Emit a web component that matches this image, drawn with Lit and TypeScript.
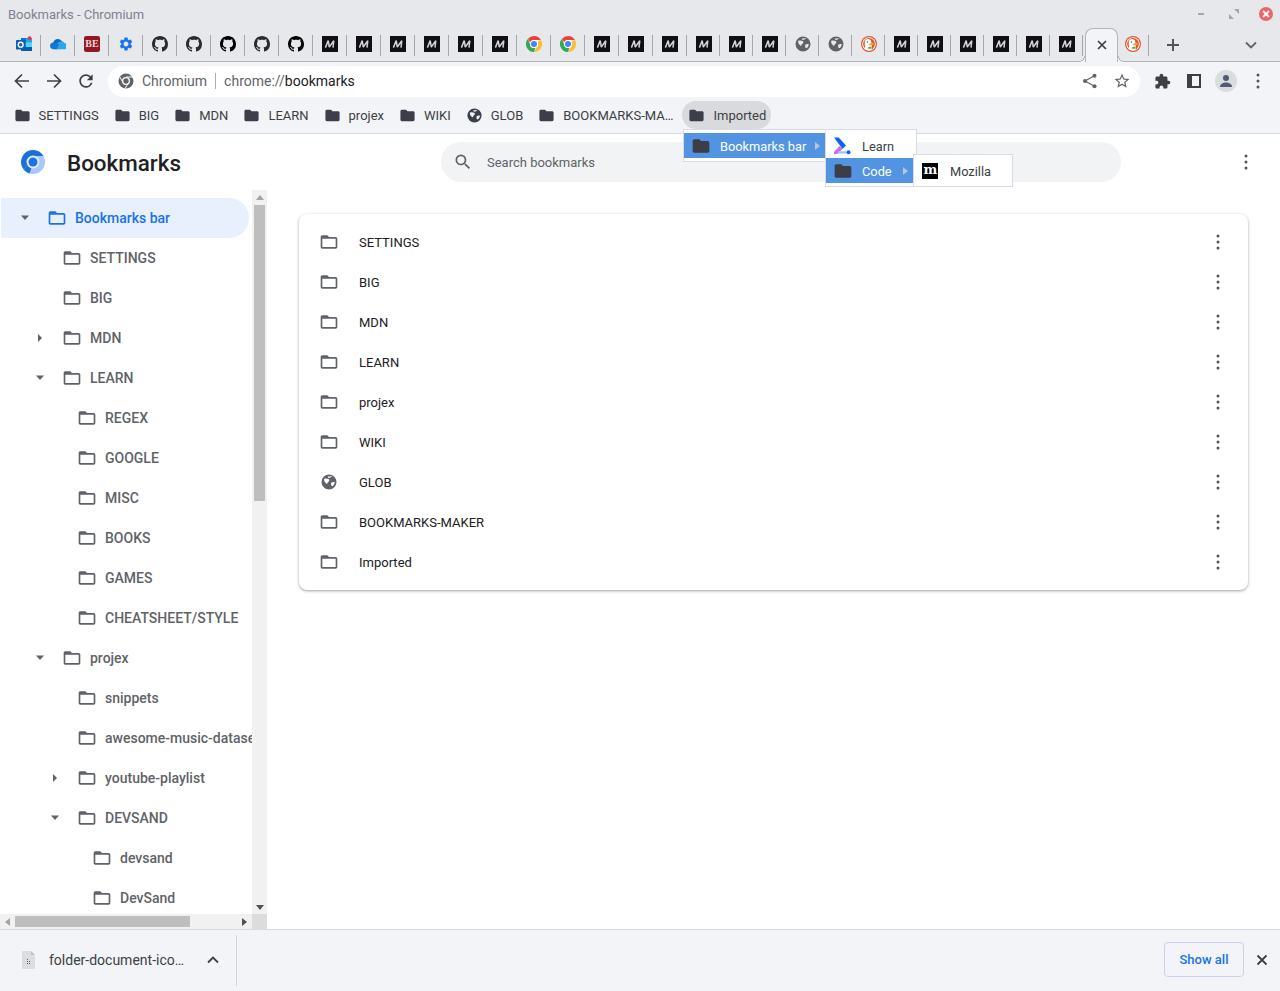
import { LitElement, html, css } from 'lit';
import { customElement } from 'lit/decorators.js';

const FOLDER_OPEN = 'M20 6h-8l-2-2H4c-1.1 0-1.99.9-1.99 2L2 18c0 1.1.9 2 2 2h16c1.1 0 2-.9 2-2V8c0-1.1-.9-2-2-2zm0 12H4V8h16v10z';
const FOLDER = 'M10 4H4c-1.1 0-1.99.9-1.99 2L2 18c0 1.1.9 2 2 2h16c1.1 0 2-.9 2-2V8c0-1.1-.9-2-2-2h-8l-2-2z';
const GITHUB = 'M8 0C3.58 0 0 3.58 0 8c0 3.54 2.29 6.53 5.47 7.59.4.07.55-.17.55-.38 0-.19-.01-.82-.01-1.49-2.01.37-2.53-.49-2.69-.94-.09-.23-.48-.94-.82-1.13-.28-.15-.68-.52-.01-.53.63-.01 1.08.58 1.23.82.72 1.21 1.87.87 2.33.66.07-.52.28-.87.51-1.07-1.78-.2-3.64-.89-3.64-3.95 0-.87.31-1.59.82-2.15-.08-.2-.36-1.02.08-2.12 0 0 .67-.21 2.2.82.64-.18 1.32-.27 2-.27.68 0 1.36.09 2 .27 1.53-1.04 2.2-.82 2.2-.82.44 1.1.16 1.92.08 2.12.51.56.82 1.27.82 2.15 0 3.07-1.87 3.75-3.65 3.95.29.25.54.73.54 1.48 0 1.07-.01 1.93-.01 2.2 0 .21.15.46.55.38A8.013 8.013 0 0016 8c0-4.42-3.58-8-8-8z';
const GEAR = 'M19.14 12.94c.04-.3.06-.61.06-.94 0-.32-.02-.64-.07-.94l2.03-1.58c.18-.14.23-.41.12-.61l-1.92-3.32c-.12-.22-.37-.29-.59-.22l-2.39.96c-.5-.38-1.03-.7-1.62-.94l-.36-2.54c-.04-.24-.24-.41-.48-.41h-3.84c-.24 0-.43.17-.47.41l-.36 2.54c-.59.24-1.13.57-1.62.94l-2.39-.96c-.22-.08-.47 0-.59.22L2.74 8.87c-.12.21-.08.47.12.61l2.03 1.58c-.05.3-.09.63-.09.94s.02.64.07.94l-2.03 1.58c-.18.14-.23.41-.12.61l1.92 3.32c.12.22.37.29.59.22l2.39-.96c.5.38 1.03.7 1.62.94l.36 2.54c.05.24.24.41.48.41h3.84c.24 0 .44-.17.47-.41l.36-2.54c.59-.24 1.13-.56 1.62-.94l2.39.96c.22.08.47 0 .59-.22l1.92-3.32c.12-.22.07-.47-.12-.61l-2.01-1.58zM12 15.6c-1.98 0-3.6-1.62-3.6-3.6s1.62-3.6 3.6-3.6 3.6 1.62 3.6 3.6-1.62 3.6-3.6 3.6z';
const PUZZLE = 'M20.5 11H19V7c0-1.1-.9-2-2-2h-4V3.5C13 2.12 11.88 1 10.5 1S8 2.12 8 3.5V5H4c-1.1 0-1.99.9-1.99 2v3.8H3.5c1.49 0 2.7 1.21 2.7 2.7s-1.21 2.7-2.7 2.7H2V20c0 1.1.9 2 2 2h3.8v-1.5c0-1.49 1.21-2.7 2.7-2.7 1.49 0 2.7 1.21 2.7 2.7V22H17c1.1 0 2-.9 2-2v-4h1.5c1.38 0 2.5-1.12 2.5-2.5S21.88 11 20.5 11z';
// solid globe with small land cut-outs, like the default favicon
const GLOBE = 'M12 2a10 10 0 1 0 0 20 10 10 0 0 0 0-20zM5.500 8c2-1 4-.8 6 0 1.300.6 1.300 2.300.2 3.200-1 .7-2 2-2.200 3.300-1.500-.3-4.500-3.500-4-6.500zM15 13c1.300-1.200 3.300-1.300 4.700-.7-.2 2.300-1.500 4.400-3.600 5.500-1.200-1-1.600-3.300-1.100-4.800zM10.500 4.200c1.500.5 3.500.5 5.500-.2-.6 1.400-2.300 2.600-4 2.600-1.200 0-1.600-1.400-1.500-2.400z';

const icon = (d: string, size: number, color: string) => html`<svg class="ic" width=${size} height=${size} viewBox="0 0 24 24" fill=${color} fill-rule="evenodd"><path d=${d}></path></svg>`;

const kebab = () => html`<svg class="ic" width="20" height="20" viewBox="0 0 20 20" fill="#51555a"><circle cx="10" cy="4" r="1.500"></circle><circle cx="10" cy="10" r="1.500"></circle><circle cx="10" cy="16" r="1.500"></circle></svg>`;

const mediumM = () => html`<svg class="ic" width="16" height="16" viewBox="0 0 16 16"><rect width="16" height="16" fill="#101014"></rect><path d="M3.400 11.600 6.200 4.600 7.300 11 11.800 4.600 11 11.600" fill="none" stroke="#d4d4d4" stroke-width="1.500" stroke-linejoin="bevel"></path></svg>`;

const githubIcon = (color: string) => html`<svg class="ic" width="16" height="16" viewBox="0 0 16 16" fill=${color}><path d=${GITHUB}></path></svg>`;

const chromeLogo = () => html`<svg class="ic" width="16" height="16" viewBox="0 0 32 32">
  <path d="M16 0a16 16 0 0 1 13.860 8H16a8 8 0 0 0-7.500 5.200L4 5.300A16 16 0 0 1 16 0z" fill="#ea4335"></path>
  <path d="M29.860 8A16 16 0 0 1 16 32l6.930-12A8 8 0 0 0 22.900 12z" fill="#fbc02d"></path>
  <path d="M16 32A16 16 0 0 1 4 5.300L9.100 20a8 8 0 0 0 9.600 3.500z" fill="#34a853"></path>
  <circle cx="16" cy="16" r="8" fill="#fff"></circle><circle cx="16" cy="16" r="6" fill="#4285f4"></circle></svg>`;

const duckLogo = () => html`<svg class="ic" width="16" height="16" viewBox="0 0 16 16">
  <circle cx="8" cy="8" r="8" fill="#de5833"></circle><circle cx="8" cy="8" r="6.800" fill="#fff"></circle><circle cx="8" cy="8" r="5.900" fill="#de5833"></circle>
  <path d="M3.800 13.200C4.400 9.500 3 6.500 4.300 4.200 5.600 2.400 9 2.500 10 4.800c.6 1.500.3 3.400.7 5.400.2 1.200.3 2.200-.1 3.300-2 1-4.900 1-6.800-.3z" fill="#fff"></path>
  <path d="M8.200 7.800l4-1.300.5 2.300-4.500.6z" fill="#f5a623"></path>
  <path d="M7 11.200l3.200-.7.500 2.100-3.200.3z" fill="#4caf50"></path>
  <circle cx="6.400" cy="6" r=".7" fill="#2d4f8e"></circle></svg>`;

const outlookLogo = () => html`<svg class="ic" width="16" height="16" viewBox="0 0 16 16">
  <rect x="5" y="2" width="11" height="13" fill="#28a8ea"></rect><rect x="5" y="2" width="5" height="4.500" fill="#0078d4"></rect><rect x="10" y="6.500" width="6" height="4.500" fill="#50d9ff"></rect><rect x="5" y="11" width="11" height="4" fill="#0a5aa8"></rect>
  <rect x="0" y="4" width="9.500" height="9.500" rx=".6" fill="#0f5fb4"></rect><circle cx="4.700" cy="8.700" r="2.400" fill="none" stroke="#fff" stroke-width="1.400"></circle><circle cx="13.500" cy="2.200" r="2" fill="#e8384f"></circle></svg>`;

const oneDriveLogo = () => html`<svg class="ic" width="16" height="12" viewBox="0.500 3 15 11">
  <path d="M3.500 7.500a4.500 4.500 0 0 1 8.400-1.400l-5 4.500-4-1.500z" fill="#0f6cbd"></path><path d="M5 13.500h8.500a2.500 2.500 0 0 0 .5-5.900 3 3 0 0 0-4.500-1.200L5 9z" fill="#28a8ea"></path><path d="M3.500 7.200A3.200 3.200 0 0 0 3 13.500h4l2-5z" fill="#0f78d4"></path></svg>`;

const beLogo = () => html`<span class="be">BE</span>`;
const gearIcon = () => icon(GEAR, 16, '#1a73e8');
const globeIcon = () => icon(GLOBE, 18, '#5f6368');

const M = 'm', G = 'g', H = 'h', C = 'c', W = 'w', D = 'd';
const renderFav = (k: string) => {
  if (k === M) return mediumM();
  if (k === G) return githubIcon('#2b2b2f');
  if (k === H) return githubIcon('#000');
  if (k === C) return chromeLogo();
  if (k === W) return globeIcon();
  if (k === D) return duckLogo();
  if (k === 'o') return outlookLogo();
  if (k === 'n') return oneDriveLogo();
  if (k === 'b') return beLogo();
  return gearIcon();
};

const tabsA = ['o', 'n', 'b', 's', G, G, H, G, H, M, M, M, M, M, M, C, C, M, M, M];
const tabsB = [M, M, M, W, W, D, M, M, M, M, M, M];

const barItems = [
  { t: 'SETTINGS' }, { t: 'BIG' }, { t: 'MDN' }, { t: 'LEARN' }, { t: 'projex' }, { t: 'WIKI' },
  { t: 'GLOB', globe: true }, { t: 'BOOKMARKS-MA…' }, { t: 'Imported', active: true },
];

const treeRows: { t: string; d: number; a?: 'open' | 'closed'; sel?: boolean }[] = [
  { t: 'Bookmarks bar', d: 0, a: 'open', sel: true },
  { t: 'SETTINGS', d: 1 }, { t: 'BIG', d: 1 }, { t: 'MDN', d: 1, a: 'closed' }, { t: 'LEARN', d: 1, a: 'open' },
  { t: 'REGEX', d: 2 }, { t: 'GOOGLE', d: 2 }, { t: 'MISC', d: 2 }, { t: 'BOOKS', d: 2 }, { t: 'GAMES', d: 2 },
  { t: 'CHEATSHEET/STYLE', d: 2 }, { t: 'projex', d: 1, a: 'open' }, { t: 'snippets', d: 2 },
  { t: 'awesome-music-dataset', d: 2 }, { t: 'youtube-playlist', d: 2, a: 'closed' }, { t: 'DEVSAND', d: 2, a: 'open' },
  { t: 'devsand', d: 3 }, { t: 'DevSand', d: 3 },
];

const listRows = ['SETTINGS', 'BIG', 'MDN', 'LEARN', 'projex', 'WIKI', 'GLOB', 'BOOKMARKS-MAKER', 'Imported'];

@customElement('app-root')
export class AppRoot extends LitElement {
  static styles = css`
    :host { display: flex; flex-direction: column; position: relative; height: 991px; width: 1280px; overflow: hidden; background: #fff; font-family: Roboto, "Liberation Sans", sans-serif; color: #202124; }
    .ic { display: block; flex: none; }
    .titlebar { height: 28px; background: #e7e8ec; display: flex; align-items: center; padding: 0 7px 0 8px; font-size: 13px; color: #7f8290; flex: none; }
    .winbtns { margin-left: auto; display: flex; align-items: center; gap: 18px; }
    .close { width: 14px; height: 14px; border-radius: 50%; background: #f4606a; display: flex; align-items: center; justify-content: center; }
    .tabstrip { height: 34px; box-sizing: border-box; background: #e7e8ec; border-bottom: 1px solid #b4b5ba; display: flex; padding-left: 7px; flex: none; }
    .tab { height: 33px; display: flex; align-items: center; justify-content: center; position: relative; flex: none; padding-bottom: 1px; box-sizing: border-box; }
    .tab.sep::after { content: ''; position: absolute; right: 0; top: 7px; height: 21px; width: 1px; background: #a5a6ab; }
    .t34 { width: 34px; }
    .t33 { width: 33px; }
    .duck { width: 33px; margin-left: -2px; }
    .be { width: 16px; height: 16px; background: #8f1a26; border-radius: 2px; color: #f3d9d9; font: 700 10px/16px "Liberation Serif", serif; text-align: center; display: block; }
    .tab.active { width: 33px; height: 34px; margin: 0 0 -1px 2px; background: #f3f4f7; border: 1px solid #b4b5ba; border-bottom: none; border-radius: 8px 8px 0 0; z-index: 1; }
    .tab.active::before, .tab.active::after { content: ''; position: absolute; bottom: 0; width: 6px; height: 6px; }
    .tab.active::before { left: -7px; background: radial-gradient(circle at 0 0, transparent 5px, #b4b5ba 5px, #b4b5ba 6px, #f3f4f7 6px); }
    .tab.active::after { right: -7px; background: radial-gradient(circle at 100% 0, transparent 5px, #b4b5ba 5px, #b4b5ba 6px, #f3f4f7 6px); }
    .newtab { margin-left: 13px; width: 22px; height: 33px; display: flex; align-items: center; justify-content: center; }
    .tabmenu { margin-left: auto; margin-right: 23px; height: 33px; display: flex; align-items: center; }
    .toolbar { height: 36px; background: #f3f4f7; display: flex; align-items: flex-start; flex: none; padding-top: 4px; box-sizing: border-box; }
    .navbtn { width: 32px; height: 31px; padding-bottom: 1px; box-sizing: border-box; display: flex; align-items: center; justify-content: center; flex: none; }
    .nav { display: flex; padding-left: 6px; }
    .omni { margin-left: 6px; width: 1032px; height: 31px; background: #fff; border-radius: 16px; display: flex; align-items: center; padding: 0 2px 1px 10px; box-sizing: border-box; font-size: 14px; color: #5f6368; flex: none; }
    .omni .chrome-ic { margin-right: 8px; }
    .omni .div { width: 1px; height: 16px; background: #a9abb0; margin: 0 8px; }
    .omni b { font-weight: 400; color: #202124; }
    .omni .end { margin-left: auto; display: flex; }
    .omni .navbtn { height: 30px; padding-bottom: 0; }
    .tools { display: flex; margin-left: 6px; }
    .avatar { width: 22px; height: 22px; border-radius: 50%; background: #dadce0; display: flex; align-items: center; justify-content: center; }
    .bar { height: 36px; box-sizing: border-box; background: #f3f4f7; border-bottom: 1px solid #d6d9e6; display: flex; align-items: flex-start; padding: 3px 0 0 6.500px; flex: none; gap: 1px; }
    .bar-item { display: flex; align-items: center; height: 28px; padding: 0 7px; gap: 8px; font-size: 13px; color: #3c4043; border-radius: 14px; white-space: nowrap; box-sizing: border-box; }
    .bar-item.active { background: #d9dadd; padding: 0 5px 0 6px; margin-left: 1px; }
    .page { flex: 1; display: flex; flex-direction: column; min-height: 0; }
    .page-head { height: 56px; display: flex; align-items: center; flex: none; }
    .brand { width: 441px; flex: none; display: flex; align-items: center; padding-left: 21px; box-sizing: border-box; gap: 22px; font-size: 22.4px; font-weight: 500; color: #202124; }
    .brand span { padding-top: 2px; }
    .search { width: 680px; height: 40px; border-radius: 20px; background: #f1f3f4; display: flex; align-items: center; padding-left: 12px; gap: 14px; box-sizing: border-box; font-size: 13px; color: #5f6368; flex: none; }
    .head-menu { margin-left: 115px; }
    .split { flex: 1; display: flex; min-height: 0; }
    .side { width: 267px; flex: none; display: flex; flex-direction: column; min-height: 0; }
    .side-top { flex: 1; display: flex; min-height: 0; }
    .tree { width: 252px; padding-top: 8px; padding-left: 1px; overflow: hidden; box-sizing: border-box; flex: none; }
    .row { width: 248px; height: 40px; display: flex; align-items: center; white-space: nowrap; font-size: 14px; font-weight: 500; color: #5f6368; border-radius: 0 20px 20px 0; box-sizing: border-box; }
    .row.sel { background: #e8f0fe; color: #1a73e8; }
    .arrow { width: 20px; height: 20px; flex: none; margin-right: 12px; display: flex; align-items: center; justify-content: center; }
    .label { margin-left: 8px; }
    .vscroll { width: 15px; background: #f1f1f1; display: flex; flex-direction: column; align-items: flex-start; padding-left: 2px; box-sizing: border-box; flex: none; }
    .vscroll .thumb { width: 11px; height: 296px; background: #bebebe; margin-top: 1px; }
    .sarrow { height: 14px; width: 11px; display: flex; align-items: center; justify-content: center; flex: none; }
    .hscroll { height: 15px; background: #f1f1f1; display: flex; align-items: center; flex: none; padding-left: 2px; box-sizing: border-box; }
    .hscroll .thumb { width: 175px; height: 11px; background: #bebebe; margin-left: 2px; }
    .corner { width: 15px; height: 15px; background: #dcdcdc; margin-left: auto; flex: none; }
    .hscroll .sarrow.right { margin-left: 49px; }
    .main { flex: 1; padding: 24px 32px; min-width: 0; }
    .card { background: #fff; border-radius: 8px; padding: 8px 0; box-shadow: 0 1px 2px rgba(60,64,67,.3), 0 1px 3px 1px rgba(60,64,67,.15); }
    .item { height: 40px; display: flex; align-items: center; padding: 0 20px; font-size: 13px; color: #202124; gap: 20px; }
    .item .kb { margin-left: auto; }
    .gl { width: 20px; display: flex; justify-content: center; flex: none; }
    .downloads { height: 62px; flex: none; background: #f3f4f7; border-top: 1px solid #d6d9e6; padding-bottom: 2px; box-sizing: border-box; display: flex; align-items: center; font-size: 14px; color: #3c4043; }
    .dl { width: 236px; height: 49px; margin-top: 2px; border-right: 1px solid #cfd3e4; display: flex; align-items: center; padding-bottom: 2px; box-sizing: content-box; flex: none; }
    .file { margin: 0 13px 0 22px; }
    .dl-chev { margin-left: 23px; }
    .show-all { margin-left: auto; width: 80px; height: 35px; border: 1px solid #c9d3e8; border-radius: 4px; color: #1a73e8; font-size: 13px; font-weight: 500; display: flex; align-items: center; justify-content: center; box-sizing: border-box; }
    .dl-close { margin: 0 8px; width: 20px; height: 20px; display: flex; align-items: center; justify-content: center; }
    .menu { position: absolute; background: #fff; border: 1px solid #dadbe5; box-sizing: border-box; z-index: 5; padding: 3px 0; font-size: 12.800px; color: #3c4043; }
    .m1 { left: 683px; top: 129px; width: 143px; height: 33px; }
    .m2 { left: 825px; top: 129px; width: 92px; height: 58px; }
    .m3 { left: 913px; top: 154px; width: 100px; height: 33px; z-index: 6; }
    .mi { height: 25px; display: flex; align-items: center; position: relative; padding: 1px 0 0 7px; box-sizing: border-box; white-space: nowrap; }
    .m3 .mi { padding-left: 8px; }
    .mi.hl { background: #5294e2; color: #fff; }
    .mi .mlabel { margin-left: 9px; }
    .mi .tri { position: absolute; right: 5px; top: 9px; width: 0; height: 0; border-left: 5px solid #b9c6d8; border-top: 4px solid transparent; border-bottom: 4px solid transparent; }
    .m2 .tri { right: 8px; }
    .learn { margin-right: 2px; }
    .mz { width: 16px; height: 16px; background: #000; color: #fff; font: 700 13px/14px "DejaVu Serif", serif; text-align: center; overflow: hidden; flex: none; letter-spacing: -1px; }
    .mz + .mlabel { margin-left: 12px; }
  `;

  renderChromiumLogo() {
    return html`<svg class="ic" width="24" height="24" viewBox="0 0 24 24">
      <circle cx="12" cy="12" r="12" fill="#a8c7fa"></circle>
      <path d="M12 0a12 12 0 0 1 10.400 6H12a6 6 0 0 0-5.600 8l-3.600 5.500A12 12 0 0 1 12 0z" fill="#1a6fd8"></path>
      <path d="M2.800 19.500 6.400 14a6 6 0 0 0 4 3.900L8.500 23.500a12 12 0 0 1-5.700-4z" fill="#1a6fd8"></path>
      <circle cx="12" cy="12" r="6.500" fill="#e3ecfb"></circle><circle cx="12" cy="12" r="4.500" fill="#1a73e8"></circle></svg>`;
  }

  renderArrow(a?: 'open' | 'closed') {
    if (!a) return html`<span class="arrow"></span>`;
    return html`<span class="arrow">${a === 'open'
      ? html`<svg width="10" height="6" viewBox="0 0 10 6" fill="#5f6368"><path d="M1 .5h8L5 5z"></path></svg>`
      : html`<svg width="6" height="10" viewBox="0 0 6 10" fill="#5f6368"><path d="M1 1v8l4-4z"></path></svg>`}</span>`;
  }

  render() {
    return html`
      <div class="titlebar">Bookmarks - Chromium
        <div class="winbtns">
          <svg width="14" height="14" viewBox="0 0 14 14"><rect x="3" y="6" width="6" height="2" fill="#a4a6ad"></rect></svg>
          <svg width="14" height="14" viewBox="0 0 14 14" fill="#a4a6ad"><path d="M7 2h5v5zM7 12H2V7z"></path></svg>
          <span class="close"><svg width="8" height="8" viewBox="0 0 8 8" stroke="#fff" stroke-width="2"><path d="M1 1l6 6M7 1 1 7"></path></svg></span>
        </div>
      </div>
      <div class="tabstrip">
        ${tabsA.map((k) => html`<div class="tab t34 sep">${renderFav(k)}</div>`)}
        ${tabsB.map((k) => html`<div class="tab t33 sep">${renderFav(k)}</div>`)}
        <div class="tab active"><svg width="12" height="12" viewBox="0 0 12 12" stroke="#3c4043" stroke-width="1.700"><path d="M2 2l8 8M10 2 2 10"></path></svg></div>
        <div class="tab sep duck">${duckLogo()}</div>
        <div class="newtab"><svg width="14" height="14" viewBox="0 0 14 14" stroke="#51555e" stroke-width="2"><path d="M7 1v12M1 7h12"></path></svg></div>
        <div class="tabmenu"><svg width="12" height="8" viewBox="0 0 12 8" fill="none" stroke="#5f6368" stroke-width="1.800"><path d="M1 1.500l5 5 5-5"></path></svg></div>
      </div>
      <div class="toolbar">
        <div class="nav">
          <div class="navbtn"><svg width="16" height="16" viewBox="0 0 16 16" fill="none" stroke="#3c4043" stroke-width="1.700"><path d="M15 8H2M8 1.500 1.500 8 8 14.500"></path></svg></div>
          <div class="navbtn"><svg width="16" height="16" viewBox="0 0 16 16" fill="none" stroke="#3c4043" stroke-width="1.700"><path d="M1 8h13M8 1.500 14.500 8 8 14.500"></path></svg></div>
          <div class="navbtn"><svg width="20" height="20" viewBox="0 0 24 24" fill="#3c4043"><path d="M17.650 6.350A7.958 7.958 0 0 0 12 4c-4.420 0-7.990 3.580-7.990 8s3.570 8 7.990 8c3.730 0 6.840-2.550 7.730-6h-2.080A5.990 5.990 0 0 1 12 18c-3.310 0-6-2.690-6-6s2.690-6 6-6c1.660 0 3.140.69 4.220 1.780L13 11h7V4l-2.350 2.350z"></path></svg></div>
        </div>
        <div class="omni">
          <svg class="ic chrome-ic" width="16" height="16" viewBox="0 0 16 16"><circle cx="8" cy="8" r="7.500" fill="#5f6368"></circle><circle cx="8" cy="8" r="4" fill="#fff"></circle><circle cx="8" cy="8" r="2.700" fill="#5f6368"></circle><path d="M8 4h7M5 9.500 1.800 4M10.500 10 7 15.500" stroke="#fff" stroke-width="1"></path></svg>
          <span>Chromium</span><span class="div"></span><span>chrome://<b>bookmarks</b></span>
          <div class="end">
            <div class="navbtn"><svg width="16" height="16" viewBox="0 0 16 16" fill="#5f6368"><circle cx="12.500" cy="2.800" r="2"></circle><circle cx="3" cy="8" r="2"></circle><circle cx="12.500" cy="13.200" r="2"></circle><path d="M12.500 2.800 3 8l9.500 5.200" fill="none" stroke="#5f6368" stroke-width="1.200"></path></svg></div>
            <div class="navbtn"><svg width="18" height="18" viewBox="0 0 24 24" fill="#5f6368"><path d="M22 9.240l-7.190-.62L12 2 9.190 8.630 2 9.240l5.460 4.730L5.820 21 12 17.270 18.180 21l-1.630-7.030L22 9.240zM12 15.400l-3.760 2.270 1-4.280-3.320-2.880 4.380-.38L12 6.100l1.710 4.040 4.380.38-3.320 2.880 1 4.280L12 15.400z"></path></svg></div>
          </div>
        </div>
        <div class="tools">
          <div class="navbtn">${icon(PUZZLE, 17, '#3c4043')}</div>
          <div class="navbtn"><svg width="14" height="14" viewBox="0 0 14 14"><path fill-rule="evenodd" d="M0 0h14v14H0zM5 2v10h7V2z" fill="#3c4043"></path></svg></div>
          <div class="navbtn"><span class="avatar"><svg width="14" height="14" viewBox="0 0 14 14" fill="#4f5b70"><circle cx="7" cy="4" r="3"></circle><path d="M1 13c0-3 3-4.500 6-4.500s6 1.500 6 4.500z"></path></svg></span></div>
          <div class="navbtn">${kebab()}</div>
        </div>
      </div>
      <div class="bar">
        ${barItems.map((b) => html`<div class="bar-item ${b.active ? 'active' : ''}">${b.globe ? icon(GLOBE, 17, '#3c4049') : icon(FOLDER, 17, '#3c3f49')}<span>${b.t}</span></div>`)}
      </div>
      <div class="page">
        <div class="page-head">
          <div class="brand">${this.renderChromiumLogo()}<span>Bookmarks</span></div>
          <div class="search"><svg width="20" height="20" viewBox="0 0 24 24" fill="#5f6368"><path d="M15.500 14h-.79l-.28-.27A6.471 6.471 0 0 0 16 9.500 6.500 6.500 0 1 0 9.500 16c1.610 0 3.090-.59 4.230-1.570l.27.28v.79l5 4.990L20.490 19l-4.990-5zm-6 0C7.010 14 5 11.990 5 9.500S7.010 5 9.500 5 14 7.010 14 9.500 11.990 14 9.500 14z"></path></svg><span>Search bookmarks</span></div>
          <div class="head-menu">${kebab()}</div>
        </div>
        <div class="split">
          <div class="side">
            <div class="side-top">
              <div class="tree">
                ${treeRows.map((r) => html`<div class="row ${r.sel ? 'sel' : ''}" style="padding-left:${14 + 15 * r.d}px">
                  ${this.renderArrow(r.a)}${icon(FOLDER_OPEN, 20, r.sel ? '#1a73e8' : '#5f6368')}<span class="label">${r.t}</span></div>`)}
              </div>
              <div class="vscroll">
                <span class="sarrow"><svg width="8" height="5" viewBox="0 0 8 5" fill="#a3a3a3"><path d="M0 5h8L4 0z"></path></svg></span>
                <div class="thumb"></div>
                <span class="sarrow" style="margin-top:auto"><svg width="8" height="5" viewBox="0 0 8 5" fill="#505050"><path d="M0 0h8L4 5z"></path></svg></span>
              </div>
            </div>
            <div class="hscroll">
              <span class="sarrow"><svg width="5" height="8" viewBox="0 0 5 8" fill="#a3a3a3"><path d="M5 0v8L0 4z"></path></svg></span>
              <div class="thumb"></div>
              <span class="sarrow right"><svg width="5" height="8" viewBox="0 0 5 8" fill="#505050"><path d="M0 0v8l5-4z"></path></svg></span>
              <div class="corner"></div>
            </div>
          </div>
          <div class="main">
            <div class="card">
              ${listRows.map((t) => html`<div class="item">${t === 'GLOB' ? html`<span class="gl">${icon(GLOBE, 18, '#5f6368')}</span>` : icon(FOLDER_OPEN, 20, '#5f6368')}<span>${t}</span><span class="kb">${kebab()}</span></div>`)}
            </div>
          </div>
        </div>
      </div>
      <div class="downloads">
        <div class="dl">
          <svg class="ic file" width="14" height="18" viewBox="0 0 14 18"><path d="M0 0h9l4 4v14H0z" fill="#dcdde0"></path><path d="M9 0l4 4H9z" fill="#bfc1c6"></path><path d="M5 8h1v1H5zM5 10h1v1H5zM5 12h1v1H5zM7 12h1v1H7zM7 10h1v1H7z" fill="#55585f"></path></svg>
          <span>folder-document-ico…</span>
          <svg class="ic dl-chev" width="12" height="8" viewBox="0 0 12 8" fill="none" stroke="#3c4043" stroke-width="1.800"><path d="M1 6.500l5-5 5 5"></path></svg>
        </div>
        <div class="show-all">Show all</div>
        <div class="dl-close"><svg width="12" height="12" viewBox="0 0 12 12" stroke="#3c4043" stroke-width="1.800"><path d="M1.500 1.500l9 9M10.500 1.500l-9 9"></path></svg></div>
      </div>
      <div class="menu m1"><div class="mi hl">${icon(FOLDER, 20, '#3b3e47')}<span class="mlabel">Bookmarks bar</span><span class="tri"></span></div></div>
      <div class="menu m2">
        <div class="mi"><svg class="ic learn" width="18" height="18" viewBox="0 0 18 18"><path d="M1 .5h4.700l7.300 8-3.500 3.500z" fill="#0b63f0"></path><path d="M1 15l5.500-6 3 2.800L5 16.500 1 17.500z" fill="#c86bf0"></path><path d="M5.500 14.200h7.500v2.200H5z" fill="#9ec5ff"></path><circle cx="15.500" cy="15.300" r="2" fill="#0b63f0"></circle></svg><span class="mlabel">Learn</span></div>
        <div class="mi hl">${icon(FOLDER, 20, '#3b3e47')}<span class="mlabel">Code</span><span class="tri"></span></div>
      </div>
      <div class="menu m3"><div class="mi"><span class="mz">m</span><span class="mlabel">Mozilla</span></div></div>
    `;
  }
}
